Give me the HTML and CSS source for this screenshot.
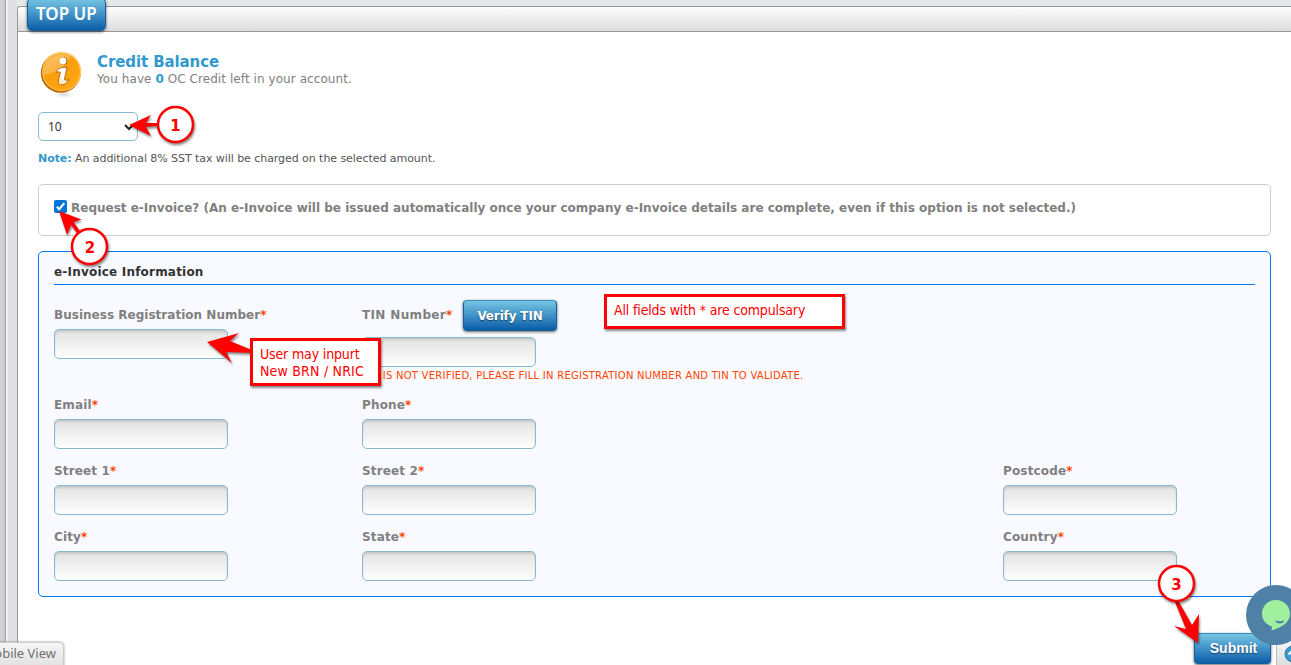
FILE: index.html
```
<!DOCTYPE html>
<html lang="en">

<head>
    <meta charset="UTF-8">
    <meta name="viewport" content="width=device-width, initial-scale=1.0">
    <title>Top Up</title>
    <link rel="stylesheet" href="styles.css">
</head>

<body>

    <div class="page">
        <div class="panel">
            <div class="panel-header">
                <h1 class="tab"><span>TOP UP</span></h1>
            </div>

            <div class="content">
                <div class="balance">
                    <svg class="info-icon" width="44" height="50" viewBox="0 0 44 50">
                        <defs>
                            <linearGradient id="orange" x1="0" y1="0" x2="0.6" y2="1">
                                <stop offset="0" stop-color="#f6b54b" />
                                <stop offset="0.5" stop-color="#fb9d0c" />
                                <stop offset="1" stop-color="#ffa712" />
                            </linearGradient>
                            <radialGradient id="shade">
                                <stop offset="0" stop-color="#d4d4d8" />
                                <stop offset="1" stop-color="#fff" stop-opacity="0" />
                            </radialGradient>
                            <linearGradient id="mark" x1="0" y1="0" x2="0" y2="1">
                                <stop offset="0.5" stop-color="#fff" />
                                <stop offset="1" stop-color="#ffe0a0" />
                            </linearGradient>
                        </defs>
                        <ellipse cx="25" cy="44.5" rx="13" ry="5" fill="url(#shade)" />
                        <circle cx="21.8" cy="22.8" r="20" fill="#bd6500" />
                        <circle cx="22.700" cy="21.700" r="19.6" fill="#ffc860" />
                        <circle cx="22.600" cy="22" r="18.4" fill="url(#orange)" />
                        <path d="M5 25C4 9 18 1 31 6C29 16 17 23 5 25Z" fill="#fff" opacity="0.22" />
                        <circle cx="24.6" cy="11" r="3.8" fill="#a85408" />
                        <circle cx="24" cy="11" r="3.4" fill="#fff" />
                        <path d="M18 20.5Q20 17 28 17.2L25.5 29Q25.5 31 30 29.6Q27 35.5 21.5 35Q18.5 34 19.6 30L21.4 22.5Q20 21 17.5 22.5Z" fill="url(#mark)" stroke="#a85408" stroke-width="0.8" />
                    </svg>
                    <div class="balance-text">
                        <h2>Credit Balance</h2>
                        <p>You have <b>0</b> OC Credit left in your account.</p>
                    </div>
                </div>

                <div class="amount">
                    <span>10</span>
                    <svg width="10" height="8" viewBox="0 0 10 8"><path d="M1 2L5 6L9 2" fill="none" stroke="#222" stroke-width="2" /></svg>
                </div>
                <p class="note"><b>Note:</b> An additional 8% SST tax will be charged on the selected amount.</p>

                <div class="request">
                    <svg class="check" width="13" height="13" viewBox="0 0 13 13">
                        <rect width="13" height="13" rx="2" fill="#0075d7" />
                        <path d="M2.8 6.8L5.2 9.2L10.3 3.2" fill="none" stroke="#fff" stroke-width="2" />
                    </svg>
                    <label>Request e-Invoice? (An e-Invoice will be issued automatically once your company e-Invoice details are complete, even if this option is not selected.)</label>
                </div>

                <div class="invoice">
                    <h3>e-Invoice Information</h3>
                    <div class="fields">
                        <div class="field brn">
                            <label>Business Registration Number<i>*</i></label>
                            <input type="text">
                        </div>
                        <div class="field tin">
                            <div class="tin-row">
                                <label>TIN Number<i>*</i></label>
                                <button class="btn verify">Verify TIN</button>
                            </div>
                            <input type="text">
                            <p class="error">TIN IS NOT VERIFIED, PLEASE FILL IN REGISTRATION NUMBER AND TIN TO VALIDATE.</p>
                        </div>
                        <div></div>

                        <div class="field">
                            <label>Email<i>*</i></label>
                            <input type="text">
                        </div>
                        <div class="field">
                            <label>Phone<i>*</i></label>
                            <input type="text">
                        </div>
                        <div></div>

                        <div class="field">
                            <label>Street 1<i>*</i></label>
                            <input type="text">
                        </div>
                        <div class="field">
                            <label>Street 2<i>*</i></label>
                            <input type="text">
                        </div>
                        <div class="field">
                            <label>Postcode<i>*</i></label>
                            <input type="text">
                        </div>

                        <div class="field">
                            <label>City<i>*</i></label>
                            <input type="text">
                        </div>
                        <div class="field">
                            <label>State<i>*</i></label>
                            <input type="text">
                        </div>
                        <div class="field">
                            <label>Country<i>*</i></label>
                            <input type="text">
                        </div>
                    </div>
                </div>

                <div class="actions">
                    <button class="btn submit">Submit</button>
                </div>
            </div>
        </div>
    </div>

    <!-- floating widgets -->
    <div class="mobile-view"><span>Mobile View</span></div>
    <div class="to-top">
        <svg width="18" height="18" viewBox="0 0 18 18">
            <circle cx="9" cy="9" r="8" fill="#3a9bd0" stroke="#2878a8" />
            <path d="M4.5 9.5L9 5L13.5 9.5M9 5V14" fill="none" stroke="#fff" stroke-width="2.2" />
        </svg>
    </div>
    <svg class="chat" width="60" height="60" viewBox="0 0 60 60">
        <circle cx="30" cy="30" r="30" fill="#4f80a6" />
        <path d="M30 15C38.5 15 44 21.5 44 29C44 37 36 42.5 25.5 45.5L26 41.5C20 39.5 16 35 16 29C16 21.5 21.5 15 30 15Z" fill="#a0f0a0" />
        <path d="M29 35.3Q33.8 37 38.5 35.3Q37 38.5 33.8 38.5Q30.5 38.5 29 35.3Z" fill="#4f80a6" />
    </svg>

    <!-- step markers and notes -->
    <svg class="marks" width="1291" height="665" viewBox="0 0 1291 665">
        <g class="arrows">
            <path d="M129 125L151 115L146 123L158 123V126L146 127L151 136Z" />
            <path d="M59 211L81.5 219.5L73.5 222L80 231L77 233L71 225L67 235Z" />
            <path d="M207 342L239 333L230 341L252 350V353L226 352L232 363Z" />
            <path d="M1198 643L1174 626L1186 629L1175 602H1179L1192 625L1199 614Z" />
        </g>
        <g class="steps">
            <circle cx="175.5" cy="124.5" r="17.5" />
            <circle cx="89.5" cy="246.5" r="17.5" />
            <circle cx="1176.5" cy="583.5" r="17.5" />
        </g>
        <g class="numbers">
            <text x="175.5" y="131">1</text>
            <text x="90" y="252.5">2</text>
            <text x="1176.5" y="589.5">3</text>
        </g>
    </svg>
    <div class="callout callout-brn"><span>User may inpurt</span><br><span class="line2">New BRN / NRIC</span></div>
    <div class="callout callout-all"><span>All fields with * are compulsary</span></div>

</body>

</html>
```
FILE: styles.css
```
* {
    box-sizing: border-box;
}

body {
    margin: 0;
    height: 665px;
    overflow: hidden;
    background: linear-gradient(to right, #d3d7da, #c8ccd0 5px);
    font-family: Verdana, "DejaVu Sans", sans-serif;
    color: #808080;
    white-space: nowrap;
}

h1, h2, h3, p {
    margin: 0;
}

.page {
    height: 665px;
    margin-left: 5px;
    padding: 6px 0 0 11px;
    border-left: 1px solid #a2a2a2;
    background: linear-gradient(to right, #fafafa 1px, #e0e0e4 2px, #e0e0e4 10px, #e6e8ea 12px);
}

.panel {
    height: 659px;
    border: 1px solid #969696;
    border-width: 1px 0 0 1px;
    border-radius: 3px 0 0 0;
    background: #fff;
}

.panel-header {
    height: 25px;
    padding-left: 9px;
    border-bottom: 1px solid #969696;
    border-radius: 3px 0 0 0;
    background: linear-gradient(#fefefe, #dcdcdc);
}

.tab {
    width: 79px;
    height: 33px;
    padding: 4px 0 0 8px;
    position: relative;
    top: -9px;
    border: 1px solid #145d98;
    border-radius: 5px;
    background: linear-gradient(#76c5e4, #0a5da8);
    box-shadow: 0 1px 3px rgba(0, 0, 0, 0.6);
    font: 600 17px/22px "Noto Sans", sans-serif;
    color: #fff;
}

.content {
    padding: 18px 20px 0;
}

.balance {
    display: flex;
    height: 62px;
}

.info-icon {
    margin-left: 1px;
}

.balance-text {
    padding: 3px 0 0 14px;
}

.balance h2 {
    font-size: 15px;
    line-height: 18px;
    letter-spacing: -0.1px;
}

.balance p {
    font-size: 12px;
    line-height: 16px;
    letter-spacing: 0.07px;
}

.balance h2,
.balance b,
.note b {
    color: #3399cc;
}

.amount {
    display: flex;
    align-items: center;
    justify-content: space-between;
    width: 100px;
    height: 29px;
    padding: 0 3px 0 9px;
    border: 1px solid #87bad2;
    border-radius: 5px;
    font: 12px "Noto Sans", sans-serif;
    color: #333;
}

.note {
    margin-top: 10px;
    font-size: 11px;
    line-height: 16px;
    letter-spacing: -0.06px;
    color: #555;
}

.request {
    display: flex;
    height: 52px;
    margin-top: 17px;
    padding: 15px;
    border: 1px solid #ccc;
    border-radius: 5px;
    font-size: 12px;
    font-weight: bold;
    line-height: 16px;
}

.check {
    margin-right: 4px;
}

.invoice {
    height: 346px;
    margin-top: 15px;
    padding: 11px 15px 0;
    border: 1px solid #007bff;
    border-radius: 5px;
    background: #f9faff;
}

.invoice h3 {
    height: 22px;
    border-bottom: 1px solid #007bff;
    font-size: 12px;
    line-height: 19px;
    letter-spacing: 0.2px;
    color: #333;
}

.fields {
    display: grid;
    grid-template-columns: 308px 641px 1fr;
    grid-template-rows: 112px 66px 66px 66px;
}

.field {
    padding-top: 22px;
    font-size: 12px;
    font-weight: bold;
    letter-spacing: 0.15px;
}

.field label {
    display: block;
    line-height: 17px;
}

.brn label {
    letter-spacing: 0.02px;
}

.field i {
    font-style: normal;
    color: #ff4500;
}

.fields > .field:nth-child(n+4) {
    padding-top: 0;
}

.field input {
    display: block;
    width: 174px;
    height: 30px;
    margin: 5px 0 0;
    border: 1px solid #87bad2;
    border-radius: 5px;
    background: linear-gradient(#e2e2e2, #fefefe);
    box-shadow: inset 0 2px 2px rgba(0, 0, 0, 0.12);
}

.fields .tin {
    padding-top: 15px;
}

.tin-row {
    display: flex;
    align-items: center;
    height: 31px;
}

.tin label {
    width: 91px;
    letter-spacing: 0.35px;
}

.tin input {
    margin-top: 6px;
}

.error {
    margin-top: 2px;
    font-size: 10px;
    font-weight: normal;
    line-height: 14px;
    letter-spacing: 0.25px;
    color: #ff4500;
}

.btn {
    padding: 0;
    border: 1px solid #145d98;
    border-top-color: #3b8bb8;
    border-radius: 4px;
    background: linear-gradient(#76c5e4, #0a5da8);
    box-shadow: 0 1px 3px rgba(0, 0, 0, 0.6);
    font: bold 12px Verdana, "DejaVu Sans", sans-serif;
    color: #fff;
    text-shadow: 0 1px 1px rgba(0, 0, 0, 0.5);
}

.verify {
    width: 94px;
    height: 31px;
    margin-left: 10px;
    letter-spacing: -0.15px;
}

.actions {
    display: flex;
    justify-content: flex-end;
    padding-top: 36px;
}

.submit {
    width: 77px;
    height: 31px;
    padding: 0 0 2px 2px;
    font: bold 14px "Liberation Sans", sans-serif;
}

.mobile-view {
    position: absolute;
    left: -20px;
    top: 642px;
    width: 84px;
    height: 30px;
    padding-right: 7px;
    border: 1px solid #ccc;
    border-radius: 5px;
    background: linear-gradient(#f6f6f6, #dedede);
    box-shadow: 0 0 2px rgba(0, 0, 0, 0.5);
    font: 13px/21px "Noto Sans", sans-serif;
    color: #707070;
}

.mobile-view span {
    float: right;
}

.to-top {
    position: absolute;
    left: 1276px;
    top: 640px;
    width: 15px;
    height: 25px;
    padding: 5px 0 0 7px;
    overflow: hidden;
    border-left: 1px solid #bbb;
    background: linear-gradient(#f6f6f6, #dedede);
}

.chat {
    position: absolute;
    left: 1246px;
    top: 585px;
}

.marks {
    position: absolute;
    left: 0;
    top: 0;
}

.arrows,
.steps {
    filter: drop-shadow(1px 2px 1px rgba(0, 0, 0, 0.45));
}

.arrows {
    fill: #f00;
}

.steps {
    fill: #fff;
    stroke: #f00;
    stroke-width: 2.5;
}

.numbers {
    font-size: 15px;
    font-weight: bold;
    fill: #f00;
    text-anchor: middle;
}

.callout {
    position: absolute;
    padding: 5px 7px;
    border: 3px solid #f00;
    background: #fff;
    box-shadow: 1px 2px 2px rgba(0, 0, 0, 0.45);
    font: 14px/17px Tahoma, "DejaVu Sans Condensed", "DejaVu Sans", sans-serif;
    letter-spacing: -0.15px;
    color: #f00;
}

.callout-brn {
    left: 250px;
    top: 338px;
    width: 131px;
    height: 48px;
}

.line2 {
    letter-spacing: 0.2px;
}

.callout-all {
    left: 604px;
    top: 294px;
    width: 241px;
    height: 35px;
}
```
